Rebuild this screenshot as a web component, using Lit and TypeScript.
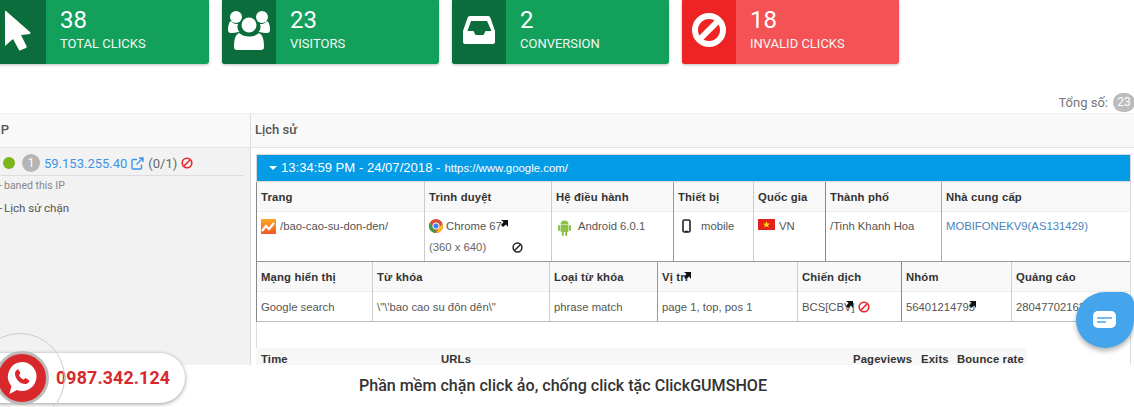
import { LitElement, html, css, svg } from "lit";
import { customElement } from "lit/decorators.js";

const ban = (s: number, c: string) => html`<svg class="ic" width=${s} height=${s} viewBox="0 0 24 24" fill="none" stroke=${c} stroke-width="3.2"><circle cx="12" cy="12" r="9.6"/><path d="M5.5 18.5 18.5 5.5"/></svg>`;
const corner = html`<svg class="corner" width="7" height="7" viewBox="0 0 7 7"><path d="M0 0h7v7L5 4.5 2 7 0 5l2.6-3z" fill="#111"/></svg>`;

const cards = [
  { n: "38", l: "Total clicks", red: false, i: svg`<path d="M13 11V46L21 39 27 50Q28 51 29 50L34 48Q35 47 34.500 46L29 35 38 34Q39 33 38 32L14 11Q13 10.500 13 11Z" fill="#fff"/>` },
  { n: "23", l: "Visitors", red: false, i: svg`<g fill="#fff"><circle cx="14" cy="17" r="6"/><circle cx="40" cy="17" r="6"/><path d="M9 33c-2 0-3-1-3-3 0-4 1-8 3-9 2 2.500 4 3 7 3 -1 3-.5 6 1.500 8-3 .5-6 1-8.500 1zM45 33c2 0 3-1 3-3 0-4-1-8-3-9-2 2.500-4 3-7 3 1 3 .5 6-1.500 8 3 .5 6 1 8.500 1z"/><circle cx="27" cy="25" r="7.500"/><path d="M15 50c-2 0-3-1-3-3 0-7 1-12 5-14 3 2.500 6 3.500 10 3.500s7-1 10-3.500c4 2 5 7 5 14 0 2-1 3-3 3z"/></g>` },
  { n: "2", l: "Conversion", red: false, i: svg`<path fill="#fff" fill-rule="evenodd" d="M18 16h18q2 0 2.500 2L43 31v11q0 2-2 2H13q-2 0-2-2V31l4.500-13q.5-2 2.500-2zm1 5-3.500 10h6l2 4h8l2-4h6L35 21z"/>` },
  { n: "18", l: "Invalid clicks", red: true, i: svg`<g fill="none" stroke="#fff" stroke-width="6"><circle cx="27" cy="30" r="14"/><path d="M17 40 37 20"/></g>` },
];

const t1 = [
  ["Trang", html`<svg class="ic" width="15" height="15" viewBox="0 0 15 15"><defs><linearGradient id="ga" x1="0" y1="0" x2="0" y2="1"><stop offset="0" stop-color="#f9a825"/><stop offset="1" stop-color="#ee5a24"/></linearGradient></defs><rect width="15" height="15" rx="1" fill="url(#ga)"/><path d="M1 12 5 7l3 3 5-6" fill="none" stroke="#fff" stroke-width="2.200"/></svg><span class="g1">/bao-cao-su-don-den/</span>`],
  ["Trình duyệt", html`<div class="line"><svg class="ic" width="14" height="14" viewBox="0 0 14 14"><circle cx="7" cy="7" r="7" fill="#dd4b39"/><path d="M7 14A7 7 0 0 1 1 3.500L4.500 9z" fill="#3a9f45"/><path d="M7 14 10 8.500 13.500 5A7 7 0 0 1 7 14z" fill="#f4c20d"/><circle cx="7" cy="7" r="3.200" fill="#4a7fe0" stroke="#fff"/></svg><span class="g5">Chrome 67</span>${corner}</div><div class="line l2">(360 x 640)<span class="b2">${ban(11, "#222")}</span></div>`],
  ["Hệ điều hành", html`<svg class="ic" width="17" height="17" viewBox="0 0 17 17" fill="#8bc34a"><path d="M4.500 5.500a4 4 0 0 1 8 0z"/><rect x="4.500" y="6" width="8" height="7" rx="1"/><rect x="2" y="6" width="2" height="6" rx="1"/><rect x="13" y="6" width="2" height="6" rx="1"/><rect x="5.800" y="12" width="2" height="5" rx="1"/><rect x="9.200" y="12" width="2" height="5" rx="1"/></svg><span class="g2">Android 6.0.1</span>`],
  ["Thiết bị", html`<svg class="ic phone" width="9" height="14" viewBox="0 0 9 14"><rect x="1" y="1" width="7" height="12" rx="1.500" fill="none" stroke="#222" stroke-width="1.600"/><path d="M3 12.500h3" stroke="#222" stroke-width="1.500"/></svg><span>mobile</span>`],
  ["Quốc gia", html`<svg class="ic" width="17" height="11" viewBox="0 0 17 11"><rect width="17" height="11" fill="#e5211d"/><path d="m8.500 2.200 1 2.400 2.500.1-2 1.500.8 2.400-2.300-1.400-2.300 1.400.8-2.400-2-1.500 2.500-.1z" fill="#ffde00"/></svg><span class="g1">VN</span>`],
  ["Thành phố", html`/Tinh Khanh Hoa`],
  ["Nhà cung cấp", html`<span class="lnk">MOBIFONEKV9(AS131429)</span>`],
] as const;

const t2 = [
  ["Mạng hiển thị", html`Google search`],
  ["Từ khóa", html`\\"\\'bao cao su đôn dên\\"`],
  ["Loại từ khóa", html`phrase match`],
  ["Vị trí", html`page 1, top, pos 1`],
  ["Chiến dịch", html`BCS[CBV]<span class="over cb">${corner}</span><span class="b3">${ban(12, "#e8262b")}</span>`],
  ["Nhóm", html`56401214793<span class="over">${corner}</span>`],
  ["Quảng cáo", html`280477021623`],
] as const;

@customElement("app-root")
export class AppRoot extends LitElement {
  static styles = css`
    :host { display: block; width: 1134px; height: 407px; overflow: hidden; position: relative; background: #fff; font-family: "Liberation Sans", Arial, sans-serif; color: #444; }
    .page { display: flex; flex-direction: column; height: 407px; }
    .cards { display: flex; gap: 13px; margin-left: -8px; height: 64px; flex: none; }
    .card { width: 217px; background: #13a05b; color: #fff; display: flex; border-radius: 0 0 3px 3px; box-shadow: 0 1px 3px rgba(0,0,0,.25); overflow: hidden; font-family: Roboto, sans-serif; }
    .card.red { background: #f45255; }
    .ibox { width: 54px; flex: none; background: #0b6c3c; display: flex; }
    .red .ibox { background: #ee2324; }
    .body { padding: 5px 0 0 14px; }
    .num { font-size: 24px; line-height: 30px; }
    .lab { font-size: 13px; line-height: 18px; text-transform: uppercase; color: #f1f8f3; }
    .total { height: 49px; flex: none; display: flex; justify-content: flex-end; align-items: flex-end; gap: 5px; font: 13px/19px Roboto, sans-serif; color: #777; margin-right: -1px; padding-bottom: 1px; box-sizing: border-box; }
    .badge { width: 22px; height: 19px; border-radius: 10px; background: #bbb; color: #fff; font-size: 12px; text-align: center; }
    .grid { flex: 1; min-height: 0; display: grid; grid-template-columns: 251px 1fr; border-top: 1px solid #eee; overflow: hidden; }
    .left { background: #f2f2f2; border-right: 1px solid #ddd; overflow: hidden; position: relative; }
    .phead { height: 33px; background: #f9f9f9; border-bottom: 1px solid #e4e4e4; font: 500 13px/32px Roboto, sans-serif; color: #555; }
    .left .phead { margin-left: -3px; }
    .right .phead { padding-left: 4px; }
    .iprow { display: flex; align-items: center; height: 24px; padding: 3px 0 0 3px; margin-right: 6px; border-bottom: 1px solid #ddd; font-size: 13px; color: #666; }
    .dot { width: 12px; height: 12px; border-radius: 50%; background: #7db51c; margin-right: 7px; }
    .one { width: 18px; height: 18px; border-radius: 50%; background: #b5b5b5; color: #fff; font: 12px/18px Roboto, sans-serif; text-align: center; margin-right: 4px; }
    .ip { color: #3d93ea; font: 13px Roboto, sans-serif; }
    .ext { margin: 0 4px 0 4px; }
    .paren { font: 13px Roboto, sans-serif; }
    .iprow .ic { margin-left: 4px; }
    .small { font: 10.500px/20px Roboto, sans-serif; color: #888; padding-left: 4px; }
    .hist { font: 11.500px/24px Roboto, sans-serif; color: #555; padding-left: 4px; }
    .left .small::before, .hist::before { content: "-"; position: absolute; left: -1px; }
    .right { overflow: hidden; min-width: 0; }
    .panel { margin: 6px 3px 0 5px; border-left: 1px solid #ddd; border-right: 1px solid #ddd; height: 300px; }
    .pbar { height: 28px; background: #049ce7; color: #fff; font-size: 13.100px; line-height: 28px; display: flex; align-items: center; padding-left: 12px; margin: 0 -1px; border: 1px solid #d8d8d8; box-sizing: border-box; }
    .caret { width: 0; height: 0; border: 4px solid transparent; border-top-color: #fff; border-bottom: 0; margin-right: 4px; }
    .url { font-size: 11.400px; margin-left: 4px; }
    .tbl { display: grid; margin-left: -1px; border-left: 1px solid #888; font-size: 11.300px; }
    .t1 { grid-template-columns: 168px 127px 122px 80px 72px 116px 1fr; border-bottom: 1px solid #999; }
    .t2 { grid-template-columns: 116px 177px 108px 140px 104px 110px 1fr; border-bottom: 1px solid #bbb; }
    .cell { display: flex; flex-direction: column; border-right: 1px solid #ccc; min-width: 0; }
    .cell:last-child { border-right: 0; }
    .t1 .cell:nth-child(3) { border-right-color: #999; }
    .t1 .cell:nth-child(5) { border-right-color: #888; }
    .t1 .cell:nth-child(6) { border-right-color: #aaa; }
    .t2 .cell:nth-child(3) { border-right-color: #999; }
    .t2 .cell:nth-child(5) { border-right-color: #888; }
    .h { height: 30px; background: #f8f8f8; border-bottom: 1px solid #eee; font-weight: 700; color: #333; line-height: 31px; padding-left: 4px; box-sizing: border-box; letter-spacing: .15px; white-space: nowrap; }
    .v { padding: 0 4px; color: #555; display: flex; align-items: center; flex-wrap: wrap; white-space: nowrap; }
    .t1 .v { height: 49px; align-items: flex-start; align-content: flex-start; padding-top: 7px; box-sizing: border-box; line-height: 14px; }
    .t2 .v { height: 29px; }
    .line { display: flex; align-items: center; width: 100%; }
    .l2 { margin-top: 7px; color: #666; }
    .b2 { margin-left: 26px; display: flex; }
    .b3 { margin-left: 3px; display: flex; }
    .ic { flex: none; display: block; }
    .v > .ic { margin-right: 2px; }
    .v > .ic.phone { margin: 0 10px 0 4px; }
    .corner { flex: none; margin: -6px 0 0 -1px; align-self: center; }
    .over { width: 0; position: relative; }
    .over .corner { position: absolute; left: -6px; top: -6px; margin: 0; }
    .over.cb .corner { left: -9px; }
    .vt { position: relative; display: inline-block; }
    .vt .corner { position: absolute; right: -3px; top: 10px; margin: 0; }
    .g5 { margin-left: 3px; } .g2 { margin-left: 3px; } .g1 { margin-left: 2px; }
    .lnk { color: #4a82bd; }
    .sub { display: grid; grid-template-columns: 180px 412px 68px 36px 1fr; margin: 26px 103px 0 -1px; height: 20px; background: #f7f7f7; padding-left: 5px; font-size: 11.300px; font-weight: 700; color: #333; line-height: 22px; letter-spacing: .15px; }
    .footer { height: 42px; flex: none; background: #fff; text-align: center; font: 500 16.100px/42px Roboto, sans-serif; color: #333; padding-right: 8px; }
    .pill { position: absolute; left: -30px; top: 353px; width: 215px; height: 50px; border-radius: 25px; background: #fff; box-shadow: 0 1px 4px rgba(0,0,0,.4); box-sizing: border-box; padding-left: 86px; font: 700 17.800px/50px Roboto, sans-serif; color: #d8282b; letter-spacing: .15px; }
    .ring { position: absolute; left: -25px; top: 333px; width: 90px; height: 90px; border: 1px solid #ccc; border-radius: 50%; box-sizing: border-box; }
    .phonebtn { position: absolute; left: -5px; top: 351px; width: 54px; height: 54px; border-radius: 50%; background: #d8282b; border: 3px solid #bbb; box-sizing: border-box; display: flex; align-items: center; justify-content: center; }
    .chat { position: absolute; left: 1076px; top: 292px; width: 58px; height: 56px; background: #45a5ec; border-radius: 50% 12px 50% 50%; box-shadow: 0 3px 5px rgba(0,0,0,.3); display: flex; align-items: center; justify-content: center; }
  `;

  render() {
    const tbl = (cls: string, rows: readonly (readonly [string, unknown])[]) => html`<div class="tbl ${cls}">${rows.map(([h, v]) => html`<div class="cell"><div class="h">${h === "Vị trí" ? html`<span class="vt">${h}${corner}</span>` : h}</div><div class="v">${v}</div></div>`)}</div>`;
    return html`<div class="page">
      <div class="cards">${cards.map(c => html`<div class="card ${c.red ? "red" : ""}"><div class="ibox"><svg width="54" height="64" viewBox="0 0 54 64">${c.i}</svg></div><div class="body"><div class="num">${c.n}</div><div class="lab">${c.l}</div></div></div>`)}</div>
      <div class="total">Tổng số: <span class="badge">23</span></div>
      <div class="grid">
        <div class="left">
          <div class="phead">IP</div>
          <div class="iprow"><span class="dot"></span><span class="one">1</span><span class="ip">59.153.255.40</span>
            <svg class="ic ext" width="13" height="13" viewBox="0 0 13 13" fill="none" stroke="#3d93ea" stroke-width="1.400"><path d="M10.500 7.500V11a1 1 0 0 1-1 1H2a1 1 0 0 1-1-1V3.500a1 1 0 0 1 1-1h4M5.500 7.500 12 1M8 1h4v4"/></svg>
            <span class="paren">(0/1)</span>${ban(12, "#e8262b")}</div>
          <div class="small">baned this IP</div>
          <div class="hist">Lịch sử chặn</div>
        </div>
        <div class="right">
          <div class="phead">Lịch sử</div>
          <div class="panel">
            <div class="pbar"><span class="caret"></span>13:34:59 PM - 24/07/2018 - <span class="url">https://www.google.com/</span></div>
            ${tbl("t1", t1)}
            ${tbl("t2", t2)}
            <div class="sub"><span>Time</span><span>URLs</span><span>Pageviews</span><span>Exits</span><span>Bounce rate</span></div>
          </div>
        </div>
      </div>
      <div class="footer">Phần mềm chặn click ảo, chống click tặc ClickGUMSHOE</div>
    </div>
    <div class="pill">0987.342.124</div>
    <div class="ring"></div>
    <div class="phonebtn"><svg width="32" height="34" viewBox="0 0 32 34"><path fill="#fff" d="M16 1a14.500 14.500 0 0 1 0 29 15 15 0 0 1-5-.9L3.500 33l2-8A14.500 14.500 0 0 1 16 1z"/><path fill="#d8282b" d="M12 8l2.500 4-1.500 2c.8 2 2.500 3.700 4.500 4.500l2-1.500 4 2.500c-.5 2.200-2 3.500-4 3.500-5.500 0-10.500-5-10.500-10.500 0-2 1.500-4 3.500-4.500z"/></svg></div>
    <div class="chat"><svg width="24" height="19" viewBox="0 0 24 19"><rect width="23" height="17" rx="5" fill="#fff"/><path d="M4 7h15M4 11h9" stroke="#45a5ec" stroke-width="1.700"/></svg></div>`;
  }
}
